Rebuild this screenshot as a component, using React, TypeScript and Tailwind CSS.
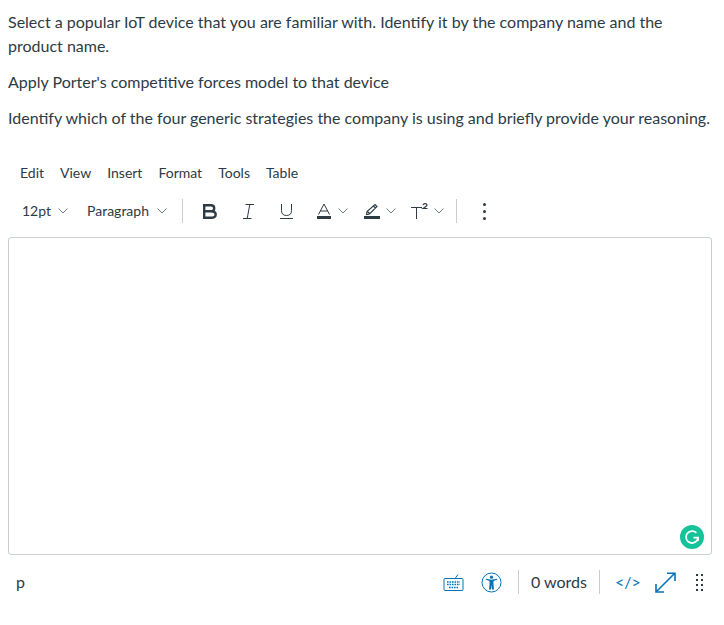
import React from "react";

const Chevron = ({ cls = "ml-[8px]" }: { cls?: string }) => (
  <svg width="10" height="6" viewBox="0 0 10 6" fill="none" stroke="#6b7780" strokeWidth="1" className={cls}>
    <path d="M0.5 0.5 L5 5 L9.5 0.5" />
  </svg>
);

const Sep = ({ cls }: { cls: string }) => <div className={`w-px bg-[#c7cdd1] ${cls}`} />;

export default function App() {
  return (
    <div className="w-[724px] h-[625px] bg-white text-[#2d3b45] overflow-hidden font-['Lato',sans-serif]">
      <div className="pl-2 pr-2 pt-[10px] text-[16px] leading-[24px]">
        <p className="w-[680px]">Select a popular IoT device that you are familiar with. Identify it by the company name and the product name.</p>
        <p className="mt-3">Apply Porter's competitive forces model to that device</p>
        <p className="mt-3 whitespace-nowrap">Identify which of the four generic strategies the company is using and briefly provide your reasoning.</p>
      </div>

      <div className="flex items-center h-5 mt-[33px] ml-[20px] gap-[16px] text-[14px] leading-5">
        <span>Edit</span><span>View</span><span>Insert</span><span>Format</span><span>Tools</span><span>Table</span>
      </div>

      <div className="flex items-center h-[28px] mt-[14px] ml-[22px] text-[14px]">
        <span className="pb-[2px]">12pt</span><Chevron cls="ml-[7px]" />
        <span className="ml-[19px] pb-[2px]">Paragraph</span><Chevron />
        <Sep cls="h-[24px] ml-[15px]" />
        <span className="ml-[20px]">
          <svg width="14" height="15" viewBox="0 0 14 15" fill="none" stroke="#2d3b45" strokeWidth="2.4" className="block">
            <path d="M1.2 0 V15 M1.2 1.2 H8 Q11.2 1.2 11.2 4.2 Q11.2 7.3 8 7.3 H1.2 M8 7.3 Q12.7 7.3 12.7 10.6 Q12.7 13.8 8 13.8 H1.2" />
          </svg>
        </span>
        <span className="ml-[26px]">
          <svg width="11" height="15" viewBox="0 0 11 15" fill="none" stroke="#2d3b45" strokeWidth="1" className="block">
            <path d="M2.5 0.5 H11 M0 14.5 H8.5 M6.8 0.5 L4.2 14.5" />
          </svg>
        </span>
        <span className="ml-[26px]">
          <svg width="13" height="15" viewBox="0 0 13 15" fill="none" stroke="#2d3b45" strokeWidth="1" className="block">
            <path d="M1.5 0 V6.5 Q1.5 11.5 6.5 11.5 Q11.5 11.5 11.5 6.5 V0 M0 14.5 H13" />
          </svg>
        </span>
        <span className="ml-[24px]">
          <svg width="14" height="17" viewBox="0 0 14 17" fill="none" className="block">
            <path d="M1.5 11.5 L7 1 L12.5 11.5 M3.2 8 H10.8" stroke="#2d3b45" strokeWidth="1" />
            <rect y="13" width="14" height="3" fill="#2d3b45" />
          </svg>
        </span>
        <Chevron cls="ml-[7px]" />
        <span className="ml-[16px]">
          <svg width="16" height="17" viewBox="0 0 16 17" fill="none" className="block">
            <path d="M3 8.5 L2.5 11.5 L5.5 11 L13 3.5 L11 1.5 Z M9.5 3 L11.5 5 M3.5 8.5 L5.5 10.5" stroke="#2d3b45" strokeWidth="1.1" />
            <rect y="13" width="16" height="3" fill="#2d3b45" />
          </svg>
        </span>
        <Chevron cls="ml-[6px]" />
        <span className="ml-[15px]">
          <svg width="17" height="17" viewBox="0 0 17 17" fill="none" className="block">
            <path d="M0 4.5 H11 M5.5 4.5 V16" stroke="#2d3b45" strokeWidth="1" />
            <path d="M12 2 Q12.5 .7 14 .7 Q16 .7 16 2 Q16 3 12 5.5 H16.5" stroke="#2d3b45" strokeWidth="1.2" />
          </svg>
        </span>
        <Chevron cls="ml-[6px]" />
        <Sep cls="h-[24px] ml-[12px]" />
        <div className="ml-[26px] flex flex-col gap-[4px]">
          <span className="w-[3px] h-[3px] rounded-full bg-[#2d3b45]" />
          <span className="w-[3px] h-[3px] rounded-full bg-[#2d3b45]" />
          <span className="w-[3px] h-[3px] rounded-full bg-[#2d3b45]" />
        </div>
      </div>

      <div className="relative ml-2 w-[704px] h-[318px] mt-[12px] border border-[#c7cdd1] rounded-[3px]">
        <div className="absolute right-[7px] bottom-[5px] w-6 h-6 rounded-full bg-[#15c39a] flex items-center justify-center">
          <svg width="16" height="16" viewBox="0 0 16 16" fill="none" stroke="#fff" strokeWidth="1.7">
            <path d="M12.4 3.9 A6 6 0 1 0 14 8.6 H9.5" />
            <path d="M14 8.4 L14 12" />
          </svg>
        </div>
      </div>

      <div className="flex items-center h-[36px] mt-[9px] ml-[16px]">
        <span className="text-[16px] w-[427px]">p</span>
        <svg width="21" height="19" viewBox="0 0 21 19" fill="none" stroke="#0374b5" strokeWidth="1">
          <path d="M12.5 5 L15 1.5" />
          <rect x="1" y="5.5" width="19" height="12" rx="1" />
          <path d="M4 9 H17 M4 11.5 H17 M6 14.5 H15" strokeWidth="1.6" strokeDasharray="1.6 .9" />
        </svg>
        <svg width="21" height="21" viewBox="0 0 21 21" fill="none" className="ml-[17px]">
          <circle cx="10.5" cy="10.5" r="9.5" stroke="#0374b5" strokeWidth="1" />
          <circle cx="10.5" cy="5.2" r="1.6" fill="#0374b5" />
          <path d="M4.5 7.5 L8.5 9 V12.5 L8 17.5 H10 L10.5 13 L11 17.5 H13 L12.5 12.5 V9 L16.5 7.5 L16 6.7 L10.5 7.8 L5 6.7 Z" fill="#0374b5" />
        </svg>
        <Sep cls="h-[24px] ml-[16px]" />
        <span className="ml-[12px] text-[16px] leading-6">0 words</span>
        <Sep cls="h-[24px] ml-[12px]" />
        <span className="ml-[15px] text-[#0374b5] text-[16px]">&lt;/&gt;</span>
        <svg width="21" height="21" viewBox="0 0 21 21" fill="none" stroke="#0374b5" strokeWidth="1.6" className="ml-[14px] mt-[1px]">
          <path d="M1.5 19.5 L19.5 1.5 M12 1.2 H20 V9 M1 12 V20 H9" />
        </svg>
        <div className="ml-[20px] grid grid-cols-2 gap-x-[3px] gap-y-[3px]">
          {Array.from({ length: 8 }).map((_, i) => (
            <span key={i} className="w-[2px] h-[2px] bg-[#2d3b45]" />
          ))}
        </div>
      </div>
    </div>
  );
}
